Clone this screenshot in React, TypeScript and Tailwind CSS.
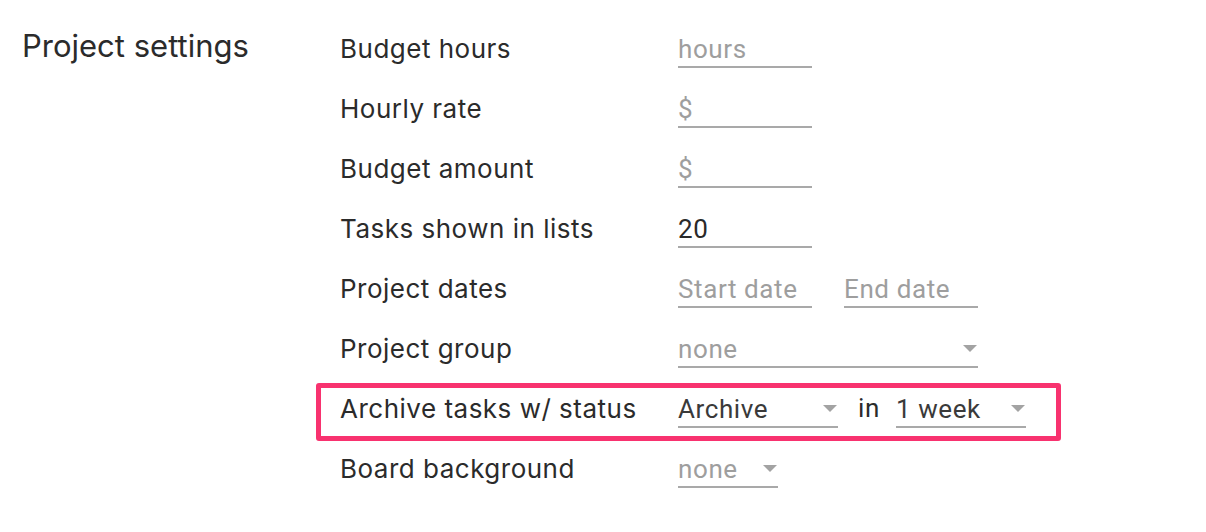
import { ReactNode } from 'react';

const inputFont = { fontFamily: 'Roboto, "Liberation Sans", sans-serif' };

function Arrow() {
  return (
    <svg width="14" height="8" viewBox="0 0 14 8" className="shrink-0">
      <path d="M0 0h14L7 7z" fill="#a3a3a3" />
    </svg>
  );
}

function TextField({ value, placeholder, width }: { value?: string; placeholder?: string; width: string }) {
  return (
    <div
      style={inputFont}
      className={`${width} h-[36px] mt-[4px] border-b-2 border-[#a9a9a9] flex items-center text-[26px] tracking-[0.6px] leading-none`}
    >
      {value ? <span className="text-[#2a2a2a]">{value}</span> : <span className="text-[#9e9e9e]">{placeholder}</span>}
    </div>
  );
}

function SelectField({ value, muted, width }: { value: string; muted?: boolean; width: string }) {
  return (
    <div
      style={inputFont}
      className={`${width} h-[36px] mt-[4px] border-b-2 border-[#a9a9a9] flex items-center justify-between pr-[1px] text-[26px] tracking-[0.6px] leading-none`}
    >
      <span className={muted ? 'text-[#9e9e9e]' : 'text-[#3a3a3a]'}>{value}</span>
      <Arrow />
    </div>
  );
}

function Row({ label, children, highlight }: { label: string; children: ReactNode; highlight?: boolean }) {
  return (
    <div className="relative h-[60px] flex items-center">
      {highlight && (
        <div className="absolute left-[-24px] top-[5px] w-[745px] h-[58px] border-[5px] border-[#f8326f] rounded-[3px] pointer-events-none" />
      )}
      <div className="w-[338px] text-[26px] text-[#2b2b2b] tracking-[0.5px]">{label}</div>
      <div className="flex items-center">{children}</div>
    </div>
  );
}

export default function App() {
  return (
    <div className="w-[1206px] h-[532px] bg-white flex" style={{ fontFamily: 'Inter, "Liberation Sans", sans-serif' }}>
      <div className="w-[340px] pl-[22px] pt-[26px] text-[31px] text-[#2b2b2b] leading-[40px]">Project settings</div>
      <div className="pt-[18px] flex flex-col">
        <Row label="Budget hours">
          <TextField placeholder="hours" width="w-[134px]" />
        </Row>
        <Row label="Hourly rate">
          <TextField placeholder="$" width="w-[134px]" />
        </Row>
        <Row label="Budget amount">
          <TextField placeholder="$" width="w-[134px]" />
        </Row>
        <Row label="Tasks shown in lists">
          <TextField value="20" width="w-[134px]" />
        </Row>
        <Row label="Project dates">
          <div className="flex gap-[32px]">
            <TextField placeholder="Start date" width="w-[134px]" />
            <TextField placeholder="End date" width="w-[134px]" />
          </div>
        </Row>
        <Row label="Project group">
          <SelectField value="none" muted width="w-[300px]" />
        </Row>
        <Row label="Archive tasks w/ status" highlight>
          <SelectField value="Archive" width="w-[160px]" />
          <span style={inputFont} className="ml-[20px] mr-[16px] text-[26px] tracking-[0.6px] text-[#2b2b2b]">in</span>
          <SelectField value="1 week" width="w-[130px]" />
        </Row>
        <Row label="Board background">
          <SelectField value="none" muted width="w-[100px]" />
        </Row>
      </div>
    </div>
  );
}
